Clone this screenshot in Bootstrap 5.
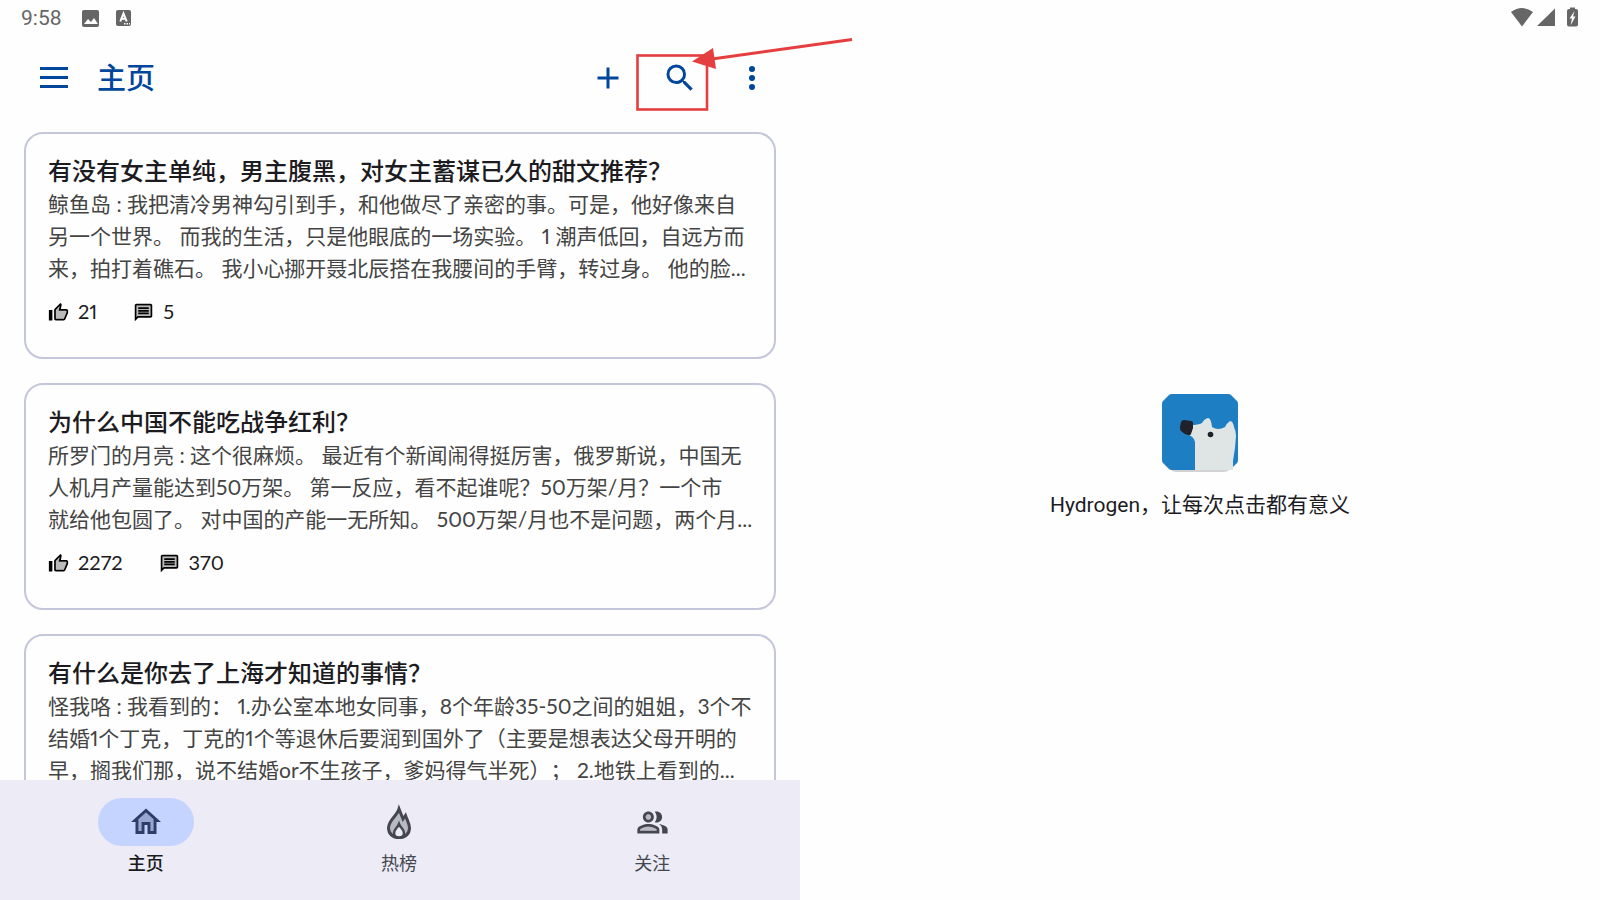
<!DOCTYPE html>
<html lang="zh-CN">
<head>
<meta charset="utf-8">
<meta name="viewport" content="width=device-width, initial-scale=1">
<title>主页</title>
<link rel="stylesheet" href="https://cdn.jsdelivr.net/npm/bootstrap@5.3.0/dist/css/bootstrap.min.css">
<style>
  body { font-family: Lato, "Noto Sans CJK SC", sans-serif; color: #1c1b1f; background: #fefefe; text-spacing-trim: space-all; font-variant-numeric: proportional-nums; }
  svg { display: block; flex: none; }
  .status-bar { flex: none; height: 36px; padding: 0 20px 0 21px; color: #666; font: 400 21px/36px Roboto, sans-serif; }
  .panes { min-height: 0; }
  .app-bar { flex: none; height: 84px; padding: 0 12px 0 26px; color: #00469c; }
  .app-bar h1 { font-size: 29px; line-height: 36px; font-weight: 500; margin: 0 0 0 15px; }
  .bar-btn { width: 72px; height: 56px; color: inherit; border: 0; }
  .menu-btn { width: 56px; }
  .callout-mark { left: -12px; top: -24px; pointer-events: none; z-index: 5; }
  .feed { padding: 12px 24px 0; gap: 24px; min-height: 0; }
  .post { border: 2px solid #c4c6da; border-radius: 19px; padding: 20px 22px 34px; flex: none; background: #fefefe; }
  .post h2 { font-size: 24px; line-height: 34px; font-weight: 500; }
  .excerpt { font-size: 21px; line-height: 32px; font-weight: 400; color: #444; white-space: nowrap; }
  .stats { margin-top: 15px; gap: 36px; font-size: 20px; line-height: 24px; }
  .stats span { gap: 9px; }
  .stats svg { margin-top: 3px; }
  .bottom-nav { flex: none; height: 120px; padding: 18px 21px 18px 19px; background: #ecebf6; color: #44474f; }
  .bottom-nav a { color: inherit; font-size: 18px; line-height: 34px; }
  .bottom-nav .active { color: #1a1b21; font-weight: 500; }
  .pill { width: 96px; height: 48px; }
  .active .pill { background: #c4d4ff; color: #2c3d68; }
  .welcome { padding-bottom: 26px; font: 400 21px/24px Roboto, "Noto Sans CJK SC", sans-serif; }
  .welcome p { margin: 19px 0 0; }
</style>
</head>
<body>
<div class="vh-100 d-flex flex-column overflow-hidden">
  <header class="status-bar d-flex align-items-center">
    <span>9:58</span>
    <svg class="ms-3" width="24" height="24" viewBox="0 0 24 24"><rect x="4" y="4" width="17" height="17" rx="2" fill="currentColor"/><path d="M6 18l4-5 3 3 3-4 4 6z" fill="#fff"/></svg>
    <svg class="ms-2" width="24" height="24" viewBox="0 0 24 24"><rect x="6" y="4" width="15" height="16" rx="2" fill="currentColor"/><path d="M10.300 15.500L13.500 7.500L16.700 15.500M11.500 12.800h4" fill="none" stroke="#fff" stroke-width="2"/><path d="M14 17h1.500v1.500H14zM16.500 17H18v1.500h-1.500zM19 17h1v1.500h-1z" fill="#fff"/></svg>
    <svg class="ms-auto" width="72" height="24" viewBox="0 0 72 24" fill="currentColor"><path d="M3 6Q14 -2 25 6L14 20.500zM29 20V20L47 2.500V20zM59 5q0-2 2-2h1V1.500h5V3h1q2 0 2 2v13.500q0 2-2 2h-7q-2 0-2-2z"/><path d="M66.500 5L61.500 12.500h2.500l-1.500 7 5-9h-2.500z" fill="#fff"/></svg>
  </header>

  <div class="panes row g-0 flex-grow-1">
    <main class="col-6 h-100 d-flex flex-column">
      <div class="app-bar d-flex align-items-center">
        <button class="bar-btn menu-btn btn p-0 d-flex align-items-center justify-content-center" aria-label="菜单"><svg width="28" height="22" viewBox="0 0 28 22" fill="currentColor"><path d="M0 0h28v3H0zM0 9h28v3H0zM0 18h28v3H0z"/></svg></button>
        <h1>主页</h1>
        <button class="bar-btn btn p-0 ms-auto d-flex align-items-center justify-content-center" aria-label="添加"><svg width="36" height="36" viewBox="0 0 24 24" fill="currentColor"><path d="M19 13h-6v6h-2v-6H5v-2h6V5h2v6h6v2z"/></svg></button>
        <button class="bar-btn btn p-0 position-relative d-flex align-items-center justify-content-center" aria-label="搜索">
          <svg width="36" height="36" viewBox="0 0 24 24" fill="currentColor"><path d="M15.500 14h-.79l-.28-.27A6.471 6.471 0 0 0 16 9.500 6.500 6.500 0 1 0 9.500 16c1.610 0 3.090-.59 4.230-1.570l.27.28v.79l5 4.990L20.490 19l-4.990-5zm-6 0C7.010 14 5 11.990 5 9.500S7.010 5 9.500 5 14 7.010 14 9.500 11.990 14 9.500 14z"/></svg>
          <svg class="callout-mark position-absolute" width="224" height="96" viewBox="632 26 224 96" aria-hidden="true"><rect x="637.500" y="55.500" width="69.500" height="54" fill="none" stroke="#e43e3e" stroke-width="2.600"/><path d="M852 39.500L712 59" stroke="#e43e3e" stroke-width="3"/><path d="M692 61.500L713 48l3 21z" fill="#e43e3e"/></svg>
        </button>
        <button class="bar-btn btn p-0 d-flex align-items-center justify-content-center" aria-label="更多"><svg width="36" height="36" viewBox="0 0 24 24" fill="currentColor"><circle cx="12" cy="6" r="2"/><circle cx="12" cy="12" r="2"/><circle cx="12" cy="18" r="2"/></svg></button>
      </div>

      <svg class="d-none" aria-hidden="true">
        <symbol id="thumb" viewBox="0 0 24 24"><path d="M9 9v10h9l3-7v-2h-9l1.340-5.340z" fill="#bbb"/><path d="M21 8h-6.310l.95-4.570.03-.32c0-.41-.17-.79-.44-1.060L14.170 1 7.580 7.590C7.220 7.950 7 8.450 7 9v10c0 1.100.9 2 2 2h9c.83 0 1.540-.5 1.840-1.220l3.020-7.050c.09-.23.14-.47.14-.73v-2c0-1.100-.9-2-2-2zm0 4l-3 7H9V9l4.340-4.340L12 10h9v2zM1 9h4v12H1z"/></symbol>
        <symbol id="comment" viewBox="0 0 24 24"><path d="M4 4h16v12H4z" fill="#bbb"/><path d="M20 2H4c-1.100 0-1.990.9-1.990 2L2 22l4-4h14c1.100 0 2-.9 2-2V4c0-1.100-.9-2-2-2zm0 14H5.170L4 17.170V4h16v12zM6 12h12v2H6zm0-3h12v2H6zm0-3h12v2H6z"/></symbol>
      </svg>

      <div class="feed flex-grow-1 d-flex flex-column overflow-hidden">
        <article class="post">
          <h2 class="mb-0">有没有女主单纯，男主腹黑，对女主蓄谋已久的甜文推荐？</h2>
          <p class="excerpt mb-0">鲸鱼岛 : 我把清冷男神勾引到手，和他做尽了亲密的事。可是，他好像来自<br>另一个世界。 而我的生活，只是他眼底的一场实验。 1 潮声低回，自远方而<br>来，拍打着礁石。 我小心挪开聂北辰搭在我腰间的手臂，转过身。 他的脸...</p>
          <div class="stats d-flex"><span class="d-flex align-items-center"><svg width="21" height="21"><use href="#thumb"/></svg>21</span><span class="d-flex align-items-center"><svg width="21" height="21"><use href="#comment"/></svg>5</span></div>
        </article>
        <article class="post">
          <h2 class="mb-0">为什么中国不能吃战争红利？</h2>
          <p class="excerpt mb-0">所罗门的月亮 : 这个很麻烦。 最近有个新闻闹得挺厉害，俄罗斯说，中国无<br>人机月产量能达到50万架。 第一反应，看不起谁呢？50万架/月？一个市<br>就给他包圆了。 对中国的产能一无所知。 500万架/月也不是问题，两个月...</p>
          <div class="stats d-flex"><span class="d-flex align-items-center"><svg width="21" height="21"><use href="#thumb"/></svg>2272</span><span class="d-flex align-items-center"><svg width="21" height="21"><use href="#comment"/></svg>370</span></div>
        </article>
        <article class="post">
          <h2 class="mb-0">有什么是你去了上海才知道的事情？</h2>
          <p class="excerpt mb-0">怪我咯 : 我看到的： 1.办公室本地女同事，8个年龄35-50之间的姐姐，3个不<br>结婚1个丁克，丁克的1个等退休后要润到国外了（主要是想表达父母开明的<br>早，搁我们那，说不结婚or不生孩子，爹妈得气半死）； 2.地铁上看到的...</p>
        </article>
      </div>

      <nav class="bottom-nav d-flex text-center">
        <a href="#" class="active flex-fill w-100 text-decoration-none d-flex flex-column align-items-center"><span class="pill rounded-pill d-flex align-items-center justify-content-center"><svg width="36" height="36" viewBox="0 0 24 24" fill="currentColor"><path d="M7 10.190V18h2v-6h6v6h2v-7.810l-5-4.500z" opacity=".3"/><path d="M12 3L2 12h3v8h6v-6h2v6h6v-8h3L12 3zm5 15h-2v-6H9v6H7v-7.810l5-4.500 5 4.500V18z"/></svg></span>主页</a>
        <a href="#" class="flex-fill w-100 text-decoration-none d-flex flex-column align-items-center"><span class="pill d-flex align-items-center justify-content-center"><svg width="36" height="36" viewBox="0 0 36 36"><path d="M18 5C16 12 7.500 16 7.500 24c0 6 4.500 9.500 10.500 9.500s10.500-3.500 10.500-9.500c0-4-2-7-4-12.500l-2.500 3.500z" fill="#b9bac5" stroke="#44474f" stroke-width="3"/><path d="M18 20c-1.500 4-5 5-5 9 0 3 2 4.500 5 4.500s5-1.500 5-4.500c0-4-3.500-5-5-9z" fill="#ecebf6" stroke="#44474f" stroke-width="2.500"/></svg></span>热榜</a>
        <a href="#" class="flex-fill w-100 text-decoration-none d-flex flex-column align-items-center"><span class="pill d-flex align-items-center justify-content-center"><svg width="33" height="33" viewBox="0 0 24 24" fill="currentColor"><path d="M9 15c-2.700 0-5.800 1.290-6 2v1h12v-1c-.2-.71-3.300-2-6-2z" opacity=".3"/><circle cx="9" cy="8" r="2" opacity=".3"/><path d="M16.670 13.130C18.040 14.060 19 15.320 19 17v3h4v-3c0-2.180-3.570-3.470-6.330-3.870zM15 12c2.210 0 4-1.790 4-4s-1.790-4-4-4c-.47 0-.91.1-1.330.24C14.500 5.270 15 6.580 15 8s-.5 2.730-1.330 3.760c.42.14.86.24 1.330.24zM9 12c2.210 0 4-1.790 4-4s-1.790-4-4-4-4 1.790-4 4 1.790 4 4 4zm0-6c1.100 0 2 .9 2 2s-.9 2-2 2-2-.9-2-2 .9-2 2-2zm0 7c-2.670 0-8 1.340-8 4v3h16v-3c0-2.660-5.330-4-8-4zm6 5H3v-.99C3.200 16.290 6.300 15 9 15s5.800 1.290 6 2v1z"/></svg></span>关注</a>
      </nav>
    </main>

    <section class="welcome col-6 h-100 d-flex flex-column align-items-center justify-content-center">
      <svg width="76" height="80" viewBox="0 0 76 80" role="img" aria-label="Hydrogen"><path d="M4 70h68l-5 6q-2 2-5 2H14q-3 0-5-2z" fill="#d2d2d4"/><path d="M10 0h56q2 0 3 1l6 6q1 1 1 3v56q0 2-1 3l-6 6q-1 1-3 1H10q-2 0-3-1l-6-6q-1-1-1-3V10q0-2 1-3l6-6q1-1 3-1z" fill="#1d7ec3"/><path d="M29 31q7 0 11-2 2-4 6-5 3 0 4 9 6 4 13 0 2-4 5-6 3 0 4 6 2 4 2 9l-1 12-2 13v9H33V48q-1-5-6-7z" fill="#dfe5e5"/><path d="M22 26l7 1q2 0 2 2v5l-2 6q-1 2-3 1-4-1-7-4-1-1-1-4l1-5q1-2 3-2z" fill="#20212b"/><circle cx="48.500" cy="40.500" r="2.800" fill="#20212b"/></svg>
      <p>Hydrogen，让每次点击都有意义</p>
    </section>
  </div>
</div>
<script src="https://cdn.jsdelivr.net/npm/bootstrap@5.3.0/dist/js/bootstrap.bundle.min.js"></script>
</body>
</html>
